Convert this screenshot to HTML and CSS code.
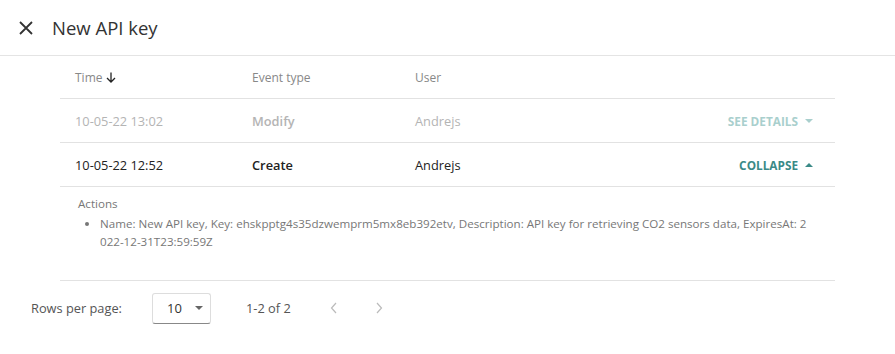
FILE: index.html
```html
<!DOCTYPE html>
<html lang="en">
  <head>
    <meta charset="UTF-8" />
    <title>New API key</title>
    <link rel="stylesheet" href="styles.css">
  </head>
  <body>
    <div class="dialog">
      <header class="dialog-header">
        <button class="btn-close" aria-label="Close">
          <svg width="14" height="14" viewBox="0 0 14 14">
            <path d="M1 1 L13 13 M13 1 L1 13" stroke="#333" stroke-width="1.8" fill="none" />
          </svg>
        </button>
        <h1>New API key</h1>
      </header>

      <div class="history">
        <div class="row head">
          <div class="cell c-time">Time
            <svg class="sort" width="10" height="11" viewBox="0 0 10 11">
              <path d="M5 0.5 V10 M1 6 L5 10 L9 6" stroke="#222" stroke-width="1.3" fill="none" />
            </svg>
          </div>
          <div class="cell c-type">Event type</div>
          <div class="cell c-user">User</div>
          <div class="cell c-action"></div>
        </div>

        <div class="row faded">
          <div class="cell c-time">10-05-22 13:02</div>
          <div class="cell c-type">Modify</div>
          <div class="cell c-user">Andrejs</div>
          <div class="cell c-action"><a href="#">See details <span class="caret down"></span></a></div>
        </div>

        <div class="row">
          <div class="cell c-time">10-05-22 12:52</div>
          <div class="cell c-type">Create</div>
          <div class="cell c-user">Andrejs</div>
          <div class="cell c-action"><a href="#">Collapse <span class="caret up"></span></a></div>
        </div>

        <div class="details">
          <div class="details-title">Actions</div>
          <ul>
            <li>Name: New API key, Key: ehskpptg4s35dzwemprm5mx8eb392etv, Description: API key for retrieving CO2 sensors data, ExpiresAt: 2022-12-31T23:59:59Z</li>
          </ul>
        </div>
      </div>

      <div class="pager">
        <span class="pager-label">Rows per page:</span>
        <div class="select">10 <span class="caret down dark"></span></div>
        <span class="pager-range">1-2 of 2</span>
        <button class="pager-btn" aria-label="Previous page">
          <svg width="8" height="12" viewBox="0 0 8 12"><path d="M6 1 L1.5 6 L6 11" stroke="#bbb" stroke-width="1.2" fill="none" /></svg>
        </button>
        <button class="pager-btn" aria-label="Next page">
          <svg width="8" height="12" viewBox="0 0 8 12"><path d="M2 1 L6.5 6 L2 11" stroke="#bbb" stroke-width="1.2" fill="none" /></svg>
        </button>
      </div>
    </div>
  </body>
</html>
```

FILE: styles.css
```css
* {
  box-sizing: border-box;
}

body {
  margin: 0;
  background-color: #fff;
  font-family: 'Open Sans', sans-serif;
  color: #222;
}

.dialog-header {
  display: flex;
  align-items: center;
  height: 56px;
  padding-left: 19px;
  border-bottom: 1px solid #e4e4e4;
}

.btn-close {
  display: flex;
  background: none;
  border: none;
  padding: 0;
  margin-right: 19px;
  cursor: pointer;
}

.dialog-header h1 {
  margin: 0;
  font-size: 18.5px;
  font-weight: normal;
  color: #333;
}

.history {
  margin: 0 60px;
}

.row {
  display: flex;
  align-items: center;
  height: 44px;
  padding: 0 22px 0 15px;
  border-bottom: 1px solid #e2e2e2;
  font-size: 12.8px;
}

.row.head {
  height: 43px;
  padding-top: 1px;
  font-size: 12px;
  color: #888;
}

.c-time {
  width: 177px;
  display: flex;
  align-items: center;
}

.c-time .sort {
  margin-left: 3px;
}

.c-type {
  width: 163px;
  font-weight: 600;
}

.row.head .c-type {
  font-weight: normal;
}

.c-user {
  flex: 1;
}

.c-action a {
  display: flex;
  align-items: center;
  text-decoration: none;
  text-transform: uppercase;
  font-size: 11.8px;
  font-weight: bold;
  color: #3b8a87;
}

.row.faded {
  color: #b4b4b4;
}

.row.faded .c-action a {
  color: #a9cfcd;
}

.caret {
  display: inline-block;
  width: 0;
  height: 0;
  margin-left: 7px;
  border-left: 4px solid transparent;
  border-right: 4px solid transparent;
}

.caret.down {
  border-top: 4px solid currentColor;
}

.caret.up {
  border-bottom: 4px solid currentColor;
}

.details {
  height: 94px;
  padding: 9px 24px 0 18px;
  border-bottom: 1px solid #e2e2e2;
  font-size: 11.6px;
  color: #777;
}

.details ul {
  margin: 4px 0 0;
  padding-left: 22px;
}

.details li {
  line-height: 18px;
  word-break: break-all;
}

.pager {
  display: flex;
  align-items: center;
  height: 54px;
  padding-left: 31px;
  font-size: 12.8px;
  color: #555;
}

.pager-label {
  width: 121px;
}

.select {
  display: flex;
  align-items: center;
  justify-content: space-between;
  width: 59px;
  height: 31px;
  padding: 0 7px 0 14px;
  border: 1px solid #ddd;
  border-bottom-color: #888;
  border-radius: 3px;
  font-size: 13px;
  color: #333;
}

.caret.dark {
  color: #666;
  margin-left: 0;
}

.pager-range {
  margin-left: 35px;
  width: 84px;
}

.pager-btn {
  display: flex;
  background: none;
  border: none;
  padding: 0;
  margin-left: 0;
  width: 45px;
}
```
